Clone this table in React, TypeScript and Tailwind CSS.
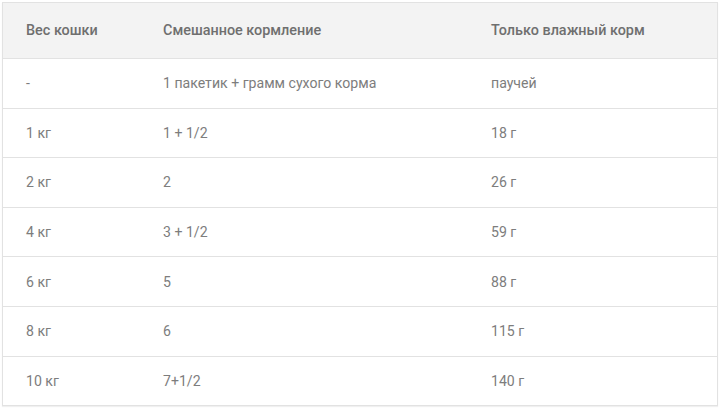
import React from "react";

const rows: [string, string, string][] = [
  ["-", "1 пакетик + грамм сухого корма", "паучей"],
  ["1 кг", "1 + 1/2", "18 г"],
  ["2 кг", "2", "26 г"],
  ["4 кг", "3 + 1/2", "59 г"],
  ["6 кг", "5", "88 г"],
  ["8 кг", "6", "115 г"],
  ["10 кг", "7+1/2", "140 г"],
];

export default function App() {
  return (
    <div className="w-[720px] h-[408px] bg-white p-[2px]" style={{ fontFamily: "Roboto, 'Noto Sans', sans-serif" }}>
      <div className="w-[716px] border border-[#e2e2e2] shadow-[0_1px_1px_rgba(0,0,0,0.06)]">
        <div className="flex h-[56px] items-center bg-[#f3f3f3] border-b border-[#e2e2e2] text-[14.4px] font-medium text-[#6f6f6f] pt-[1px]">
          <div className="w-[137px] pl-[23px]">Вес кошки</div>
          <div className="w-[328px] pl-[23px]">Смешанное кормление</div>
          <div className="flex-1 pl-[23px]">Только влажный корм</div>
        </div>
        {rows.map((r, i) => (
          <div
            key={i}
            className={
              i < rows.length - 1
                ? "flex h-[49.6px] items-center border-b border-[#e2e2e2] text-[14.1px] text-[#7d7d7d] pt-[1px]"
                : "flex h-[48.6px] items-center text-[14.1px] text-[#7d7d7d] pt-[1px]"
            }
          >
            <div className="w-[137px] pl-[23px]">{r[0]}</div>
            <div className="w-[328px] pl-[23px]">{r[1]}</div>
            <div className="flex-1 pl-[23px]">{r[2]}</div>
          </div>
        ))}
      </div>
    </div>
  );
}
